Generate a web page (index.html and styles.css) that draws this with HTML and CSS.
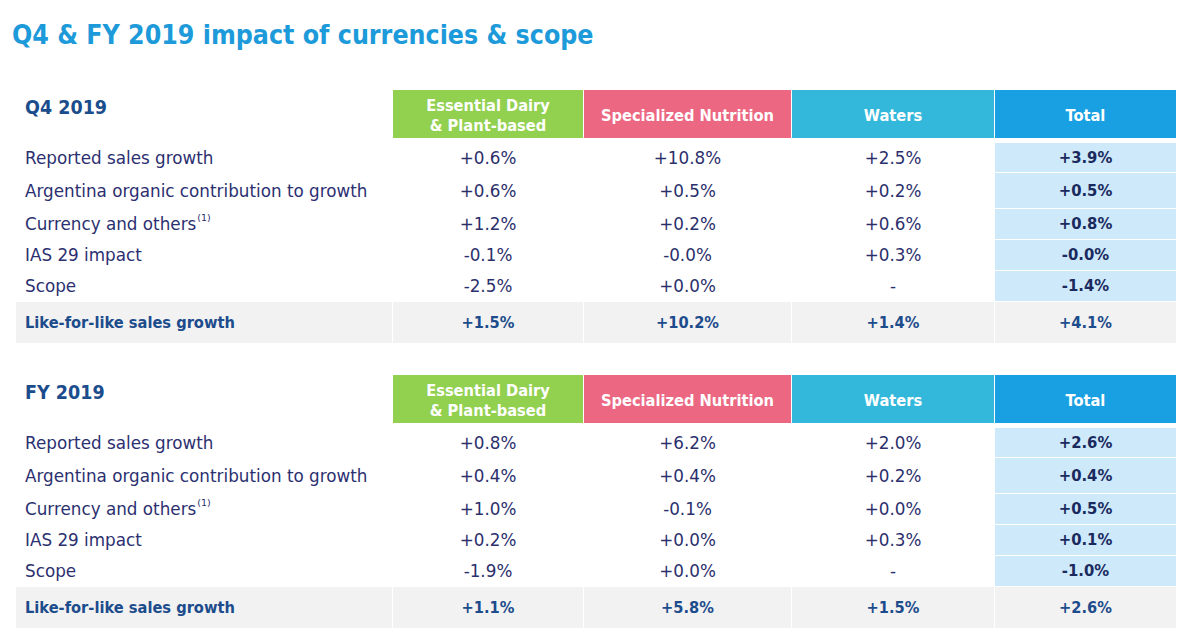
FILE: index.html
```html
<!DOCTYPE html>
<html lang="en">
<head>
<meta charset="utf-8">
<title>Q4 &amp; FY 2019 impact of currencies &amp; scope</title>
<link rel="stylesheet" href="styles.css">
</head>
<body>
<main class="page">
  <h1 class="title">Q4 &amp; FY 2019 impact of currencies &amp; scope</h1>

  <section class="tbl">
    <div class="row head">
      <div class="cell period">Q4 2019</div>
      <div class="cell hd green">Essential Dairy<br>&amp; Plant-based</div>
      <div class="cell hd pink">Specialized Nutrition</div>
      <div class="cell hd cyan">Waters</div>
      <div class="cell hd blue">Total</div>
    </div>
    <div class="row r29">
      <div class="cell label">Reported sales growth</div>
      <div class="cell val">+0.6%</div>
      <div class="cell val">+10.8%</div>
      <div class="cell val">+2.5%</div>
      <div class="cell tot">+3.9%</div>
    </div>
    <div class="row r35">
      <div class="cell label">Argentina organic contribution to growth</div>
      <div class="cell val">+0.6%</div>
      <div class="cell val">+0.5%</div>
      <div class="cell val">+0.2%</div>
      <div class="cell tot">+0.5%</div>
    </div>
    <div class="row r30">
      <div class="cell label">Currency and others<sup class="note">(1)</sup></div>
      <div class="cell val">+1.2%</div>
      <div class="cell val">+0.2%</div>
      <div class="cell val">+0.6%</div>
      <div class="cell tot">+0.8%</div>
    </div>
    <div class="row r30">
      <div class="cell label">IAS 29 impact</div>
      <div class="cell val">-0.1%</div>
      <div class="cell val">-0.0%</div>
      <div class="cell val">+0.3%</div>
      <div class="cell tot">-0.0%</div>
    </div>
    <div class="row r30">
      <div class="cell label">Scope</div>
      <div class="cell val">-2.5%</div>
      <div class="cell val">+0.0%</div>
      <div class="cell val">-</div>
      <div class="cell tot">-1.4%</div>
    </div>
    <div class="row lfl">
      <div class="cell label">Like-for-like sales growth</div>
      <div class="cell val">+1.5%</div>
      <div class="cell val">+10.2%</div>
      <div class="cell val">+1.4%</div>
      <div class="cell val">+4.1%</div>
    </div>
  </section>

  <section class="tbl second">
    <div class="row head">
      <div class="cell period">FY 2019</div>
      <div class="cell hd green">Essential Dairy<br>&amp; Plant-based</div>
      <div class="cell hd pink">Specialized Nutrition</div>
      <div class="cell hd cyan">Waters</div>
      <div class="cell hd blue">Total</div>
    </div>
    <div class="row r29">
      <div class="cell label">Reported sales growth</div>
      <div class="cell val">+0.8%</div>
      <div class="cell val">+6.2%</div>
      <div class="cell val">+2.0%</div>
      <div class="cell tot">+2.6%</div>
    </div>
    <div class="row r35">
      <div class="cell label">Argentina organic contribution to growth</div>
      <div class="cell val">+0.4%</div>
      <div class="cell val">+0.4%</div>
      <div class="cell val">+0.2%</div>
      <div class="cell tot">+0.4%</div>
    </div>
    <div class="row r30">
      <div class="cell label">Currency and others<sup class="note">(1)</sup></div>
      <div class="cell val">+1.0%</div>
      <div class="cell val">-0.1%</div>
      <div class="cell val">+0.0%</div>
      <div class="cell tot">+0.5%</div>
    </div>
    <div class="row r30">
      <div class="cell label">IAS 29 impact</div>
      <div class="cell val">+0.2%</div>
      <div class="cell val">+0.0%</div>
      <div class="cell val">+0.3%</div>
      <div class="cell tot">+0.1%</div>
    </div>
    <div class="row r30">
      <div class="cell label">Scope</div>
      <div class="cell val">-1.9%</div>
      <div class="cell val">+0.0%</div>
      <div class="cell val">-</div>
      <div class="cell tot">-1.0%</div>
    </div>
    <div class="row lfl">
      <div class="cell label">Like-for-like sales growth</div>
      <div class="cell val">+1.1%</div>
      <div class="cell val">+5.8%</div>
      <div class="cell val">+1.5%</div>
      <div class="cell val">+2.6%</div>
    </div>
  </section>
</main>
</body>
</html>
```

FILE: styles.css
```css
html, body {
  margin: 0;
  padding: 0;
  background: #ffffff;
}

body {
  font-family: "DejaVu Sans", "Noto Sans", sans-serif;
  color: #2b2f6c;
}

.page {
  width: 1190px;
  height: 630px;
  overflow: hidden;
}

.title {
  margin: 19px 0 0 12px;
  font-family: "DejaVu Sans Condensed", "DejaVu Sans", sans-serif;
  font-stretch: condensed;
  font-weight: bold;
  font-size: 26.5px;
  line-height: 32px;
  color: #1d9ad9;
}

.tbl {
  margin: 39px 0 0 16px;
  display: flex;
  flex-direction: column;
  gap: 1px;
}

.tbl.second {
  margin-top: 32px;
}

.row {
  display: grid;
  grid-template-columns: 376px 190px 207px 202px 181px;
  column-gap: 1px;
}

.row.head {
  height: 48px;
  margin-bottom: 4px;
}

.r29 { height: 29px; }
.r30 { height: 30px; }
.r35 { height: 35px; }
.lfl { height: 41px; }

.cell {
  display: flex;
  align-items: center;
  justify-content: center;
  font-size: 16.8px;
  line-height: 20px;
  white-space: nowrap;
}

.cell.label {
  justify-content: flex-start;
  padding-left: 9px;
  color: #2b3070;
}

.cell.period {
  align-items: flex-start;
  justify-content: flex-start;
  padding: 6px 0 0 9px;
  font-family: "DejaVu Sans Condensed", "DejaVu Sans", sans-serif;
  font-stretch: condensed;
  font-weight: bold;
  font-size: 19.5px;
  line-height: 24px;
  color: #1b4d8d;
}

.cell.hd {
  padding-top: 3px;
  text-align: center;
  color: #ffffff;
  font-family: "DejaVu Sans Condensed", "DejaVu Sans", sans-serif;
  font-stretch: condensed;
  font-weight: bold;
  font-size: 16.3px;
  line-height: 20px;
}

.green { background: #92d050; }
.pink { background: #eb6782; }
.cyan { background: #33b8db; }
.blue { background: #18a0e2; }

.cell.val {
  color: #2b2f6c;
}

.cell.tot {
  background: #cde9fa;
  color: #1b2a5e;
  font-family: "DejaVu Sans Condensed", "DejaVu Sans", sans-serif;
  font-stretch: condensed;
  font-weight: bold;
  font-size: 16.5px;
}

.note {
  font-size: 9.5px;
  line-height: 0;
  align-self: flex-start;
  margin-top: 9px;
  margin-left: 1px;
}

.row.lfl .cell {
  background: #f2f2f2;
  font-family: "DejaVu Sans Condensed", "DejaVu Sans", sans-serif;
  font-stretch: condensed;
  font-weight: bold;
  font-size: 16.3px;
  color: #1d4c8c;
}
```
